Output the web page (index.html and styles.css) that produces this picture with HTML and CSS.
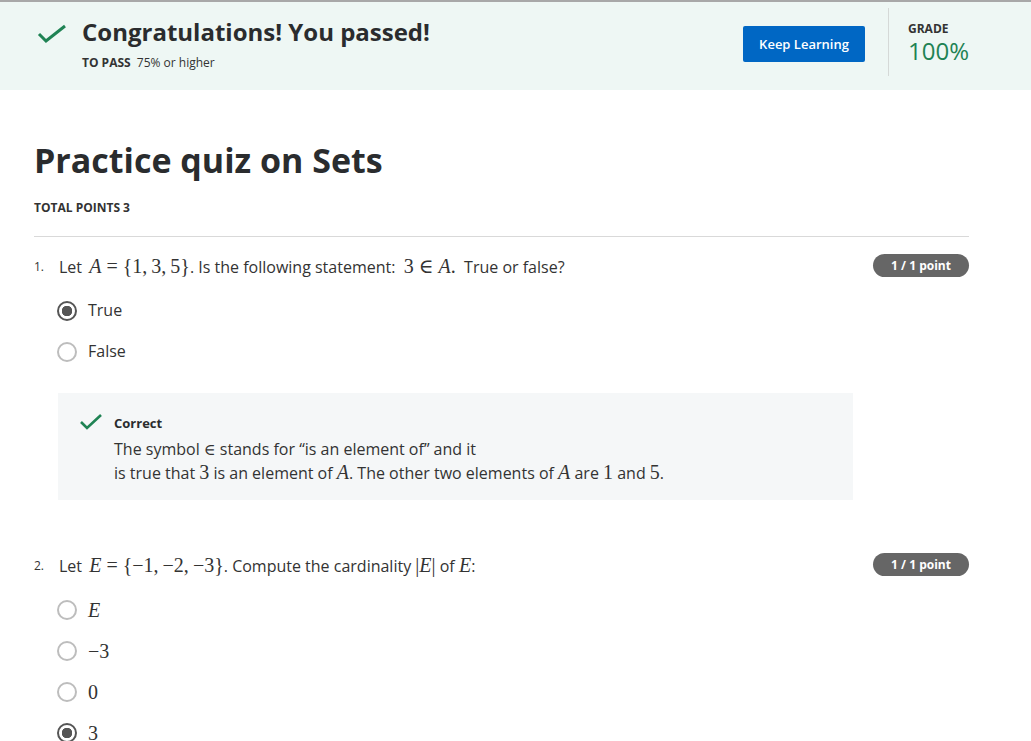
FILE: index.html
```html
<!DOCTYPE html>
<html>
<head>
<meta charset="utf-8">
<link rel="stylesheet" href="styles.css">
</head>
<body>
<div class="banner">
  <div class="banner-left">
    <svg class="check big" viewBox="0 0 30 22" width="30" height="22"><path d="M2 10 L9 17 L28 2" fill="none" stroke="#1f8354" stroke-width="3"/></svg>
    <div>
      <div class="congrats">Congratulations! You passed!</div>
      <div class="topass"><b>TO PASS</b> 75% or higher</div>
    </div>
  </div>
  <button class="keep">Keep Learning</button>
  <div class="divider"></div>
  <div class="grade">
    <div class="grade-label">GRADE</div>
    <div class="grade-value">100%</div>
  </div>
</div>

<main class="content">
  <h1 class="title">Practice quiz on Sets</h1>
  <div class="total">TOTAL POINTS 3</div>
  <hr class="rule">

  <section class="question">
    <div class="qhead">
      <span class="qnum">1.</span>
      <div class="qtext">Let <span class="m pad"><i>A</i><span class="op">=</span>{1,<span class="cm"></span>3,<span class="cm"></span>5}</span>. Is the following statement: &nbsp;<span class="m">3<span class="op">∈</span><i>A</i>.</span>&nbsp; True or false?</div>
      <span class="badge">1 / 1 point</span>
    </div>
    <div class="options">
      <div class="opt"><span class="radio on"></span><span>True</span></div>
      <div class="opt"><span class="radio"></span><span>False</span></div>
    </div>
    <div class="feedback">
      <svg class="check" viewBox="0 0 24 19" width="24" height="19"><path d="M2 9 L8 15 L22 2" fill="none" stroke="#1f8354" stroke-width="2.6"/></svg>
      <div>
        <div class="fb-title">Correct</div>
        <div class="fb-text">The symbol <span class="m sm">∈</span> stands for “is an element of” and it<br>is true that <span class="m">3</span> is an element of <span class="m"><i>A</i></span>. The other two elements of <span class="m"><i>A</i></span> are <span class="m">1</span> and <span class="m">5</span>.</div>
      </div>
    </div>
  </section>

  <section class="question q2">
    <div class="qhead">
      <span class="qnum">2.</span>
      <div class="qtext">Let <span class="m pad"><i>E</i><span class="op">=</span>{−1,<span class="cm"></span>−2,<span class="cm"></span>−3}</span>. Compute the cardinality <span class="m">|<i>E</i>|</span> of <span class="m"><i>E</i></span>:</div>
      <span class="badge">1 / 1 point</span>
    </div>
    <div class="options">
      <div class="opt"><span class="radio"></span><span class="m"><i>E</i></span></div>
      <div class="opt"><span class="radio"></span><span class="m">−3</span></div>
      <div class="opt"><span class="radio"></span><span class="m">0</span></div>
      <div class="opt"><span class="radio on"></span><span class="m">3</span></div>
    </div>
  </section>
</main>
</body>
</html>
```
FILE: styles.css
```css
* { box-sizing: border-box; }
html, body { margin: 0; padding: 0; }
body {
  font-family: "Open Sans", "Liberation Sans", sans-serif;
  color: #1f1f1f;
  background: #fff;
  border-top: 2px solid #a8a8a8;
}
.banner {
  background: #eef7f4;
  height: 88px;
  display: flex;
  align-items: flex-start;
}
.banner-left {
  display: flex;
  align-items: flex-start;
  padding-left: 37px;
  padding-top: 16px;
  flex: 1;
}
.check.big { margin-top: 6px; margin-right: 15px; }
.congrats {
  font-size: 24px;
  font-weight: 700;
  color: #2a2c2e;
  line-height: 28px;
}
.topass {
  margin-top: 9px;
  font-size: 12px;
  color: #333;
  line-height: 16px;
}
.topass b { font-size: 12px; margin-right: 3px; }
.keep {
  margin-top: 24px;
  background: #0067c4;
  color: #fff;
  border: none;
  border-radius: 2px;
  width: 122px;
  height: 36px;
  font-family: "Open Sans", sans-serif;
  font-size: 13px;
  font-weight: 600;
  padding: 0;
}
.divider {
  width: 1px;
  background: #d5d9d7;
  height: 68px;
  margin-top: 6px;
  margin-left: 23px;
}
.grade {
  width: 142px;
  padding-left: 19px;
  padding-top: 20px;
}
.grade-label { font-size: 12px; font-weight: 700; color: #333; line-height: 14px; }
.grade-value { font-size: 24px; color: #1f8354; line-height: 28px; margin-top: 1px; }

.content {
  padding: 0 62px 0 34px;
}
.title {
  margin: 49px 0 0;
  font-size: 34px;
  font-weight: 700;
  color: #2a2c2e;
  line-height: 42px;
}
.total {
  margin-top: 19px;
  font-size: 12px;
  font-weight: 700;
  color: #333;
  line-height: 16px;
}
.rule {
  border: none;
  border-top: 1px solid #d9d9d9;
  margin: 20px 0 0;
}
.question { margin-top: 18px; }
.question.q2 { margin-top: 54px; }
.qhead {
  display: flex;
  align-items: flex-start;
  font-size: 16px;
  line-height: 24px;
  color: #333;
}
.qnum { width: 25px; font-size: 12px; }
.qtext { flex: 1; }
.m { font-family: "Liberation Serif", "DejaVu Serif", serif; font-size: 20px; line-height: 1; }
.m.sm { font-size: 16px; }
.m.pad { margin-left: 3px; }
.m i { font-style: italic; }
.op { margin: 0 5px; }
.cm { display: inline-block; width: 4px; }
.badge {
  background: #666;
  color: #fff;
  font-size: 12px;
  font-weight: 700;
  border-radius: 12px;
  width: 96px;
  height: 23px;
  line-height: 23px;
  text-align: center;
  margin-top: -1px;
}
.options {
  margin-top: 20px;
  padding-left: 23px;
  display: flex;
  flex-direction: column;
  gap: 18px;
}
.opt {
  display: flex;
  align-items: center;
  gap: 11px;
  font-size: 16px;
  height: 23px;
  line-height: 23px;
  color: #333;
}
.radio {
  width: 20px;
  height: 20px;
  border-radius: 50%;
  border: 2px solid #bdbdbd;
  display: inline-block;
  flex: none;
}
.radio.on {
  border-color: #555;
  background: radial-gradient(circle, #555 0 5px, #fff 5.5px);
}
.feedback {
  margin: 30px 116px 0 24px;
  background: #f5f7f8;
  height: 107px;
  display: flex;
  align-items: flex-start;
  padding: 20px 0 0 21px;
}
.feedback .check { margin-right: 11px; margin-top: 0; }
.fb-title { font-size: 13px; font-weight: 700; color: #2a2c2e; line-height: 20px; }
.fb-text { margin-top: 4px; font-size: 16px; line-height: 24px; color: #333; }
```
